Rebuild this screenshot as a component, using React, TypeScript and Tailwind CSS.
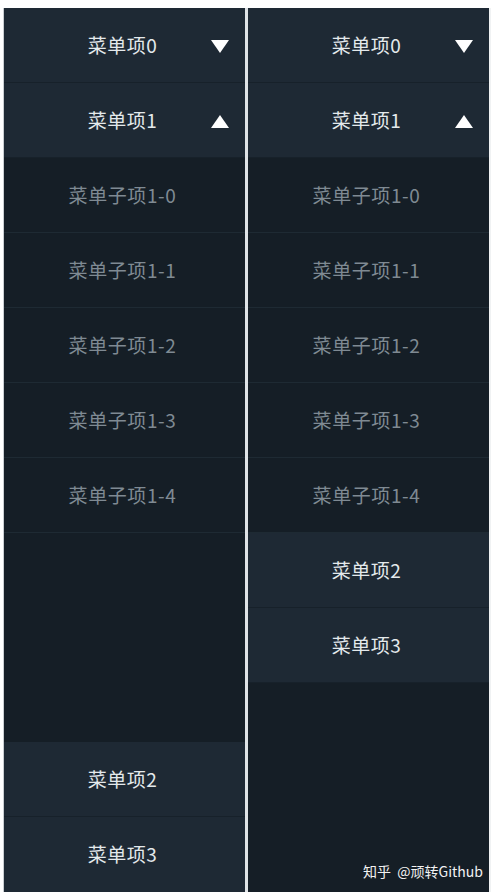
import React from "react";

const font = { fontFamily: '"Microsoft YaHei", "Noto Sans CJK SC", "Noto Sans", sans-serif' };

function Header({ label, arrow }: { label: string; arrow?: "down" | "up" }) {
  return (
    <div className="relative h-[75px] shrink-0 flex items-center justify-center bg-[#1e2934] border-b border-[#17212a] text-[19px] tracking-[0.5px] text-[#e4e9ec]">
      <span className="-ml-[4px]">{label}</span>
      {arrow && (
        <svg className="absolute right-[16px] top-[32px]" width="18" height="13" viewBox="0 0 18 13">
          {arrow === "down" ? (
            <polygon points="0,0 18,0 9,13" fill="#ffffff" />
          ) : (
            <polygon points="0,13 18,13 9,0" fill="#ffffff" />
          )}
        </svg>
      )}
    </div>
  );
}

function Sub({ label }: { label: string }) {
  return (
    <div className="h-[75px] shrink-0 flex items-center justify-center bg-[#151e26] border-b border-[#1e2a33] text-[19px] tracking-[0.6px] text-[#7f8a93]">
      <span className="-ml-[4px]">{label}</span>
    </div>
  );
}

function Subs() {
  return (
    <>
      {[0, 1, 2, 3, 4].map((i) => (
        <Sub key={i} label={`菜单子项1-${i}`} />
      ))}
    </>
  );
}

export default function App() {
  return (
    <div className="w-[500px] h-[896px] bg-white pt-[8px] pl-[3px] flex" style={font}>
      <div className="w-[242px] h-[884px] flex flex-col bg-[#151e26] border-l border-[#c9ced2]">
        <Header label="菜单项0" arrow="down" />
        <Header label="菜单项1" arrow="up" />
        <Subs />
        <div className="flex-1" />
        <Header label="菜单项2" />
        <div className="h-[75px] shrink-0 flex items-center justify-center bg-[#1e2934] text-[19px] tracking-[0.5px] text-[#e4e9ec]">
          <span className="-ml-[4px]">菜单项3</span>
        </div>
      </div>
      <div className="w-[3px] h-[884px] bg-[#dfe3e6]" />
      <div className="relative w-[241px] h-[884px] flex flex-col bg-[#151e26]">
        <Header label="菜单项0" arrow="down" />
        <Header label="菜单项1" arrow="up" />
        <Subs />
        <Header label="菜单项2" />
        <Header label="菜单项3" />
        <div className="flex-1" />
        <div className="absolute left-[115px] top-[853px] text-[14px] text-[#f2f2f2] whitespace-nowrap">
          知乎&nbsp;&nbsp;@顽转Github
        </div>
      </div>
      <div className="w-[2px] h-[884px] bg-[#f0f2f3]" />
    </div>
  );
}
